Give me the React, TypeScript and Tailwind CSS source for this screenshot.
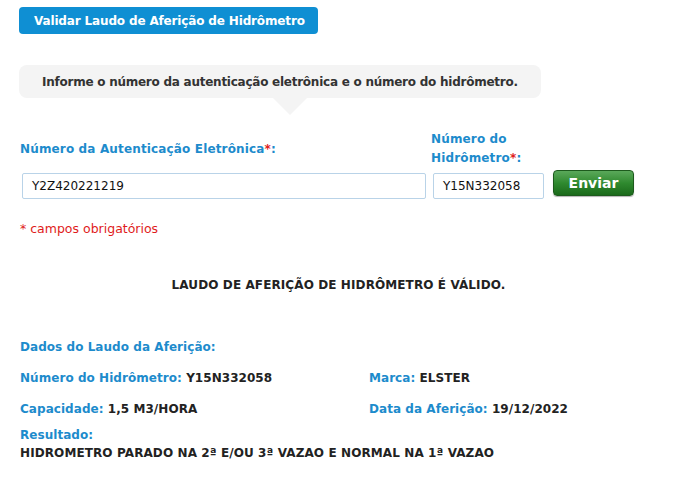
export default function App() {
  const font = { fontFamily: '"DejaVu Sans", Verdana, sans-serif' };
  return (
    <div className="w-[683px] h-[481px] bg-white relative overflow-hidden" style={font}>
      <div className="pl-[19px] pt-[7px]">
        <div className="w-[299px] h-[27px] rounded-[4px] bg-[#0f8fd3] text-white text-[12px] font-bold flex items-center pl-[15px] tracking-[-0.15px]">
          Validar Laudo de Aferição de Hidrômetro
        </div>
      </div>
      <div className="pl-[19px] mt-[31px]">
        <div className="relative w-[522px] h-[33px] rounded-[8px] bg-[#f4f4f4] text-[#333] text-[12px] font-bold flex items-center pl-[23px] tracking-[-0.25px]">
          Informe o número da autenticação eletrônica e o número do hidrômetro.
          <div className="absolute left-[254px] top-[33px] w-0 h-0 border-l-[17px] border-r-[17px] border-t-[17px] border-l-transparent border-r-transparent border-t-[#f4f4f4]" />
        </div>
      </div>
      <div className="flex mt-[32px]">
        <div className="pl-[20px] w-[411px] flex items-center">
          <div className="text-[#1d8bcc] text-[12px] font-bold tracking-[0.15px] leading-[19px]">
            Número da Autenticação Eletrônica<span className="text-[#e02020]">*</span>:
          </div>
        </div>
        <div className="pl-[20px] text-[#1d8bcc] text-[12px] font-bold leading-[19px] tracking-[0.15px]">
          Número do<br />Hidrômetro<span className="text-[#e02020]">*</span>:
        </div>
      </div>
      <div className="flex items-start mt-[-2px] pl-[22px]">
        <div className="w-[404px] h-[26px] border border-[#b9d3e8] rounded-[2px] flex items-center pl-[9px] text-[12px] text-[#111] mt-[7px]">
          Y2Z420221219
        </div>
        <div className="w-[111px] h-[26px] border border-[#b9d3e8] rounded-[2px] flex items-center pl-[9px] text-[12px] text-[#111] ml-[7px] mt-[7px]">
          Y15N332058
        </div>
        <div className="ml-[9px] mt-[4px] w-[81px] h-[26px] rounded-[4px] border border-[#1d5a1d] bg-gradient-to-b from-[#5aa85a] via-[#2f8a2f] to-[#1b6a1b] text-white text-[14px] font-bold flex items-center justify-center shadow-[0_1px_1px_rgba(0,0,0,0.3)]">
          Enviar
        </div>
      </div>
      <div className="pl-[20px] mt-[22px] text-[#e01b1b] text-[12.5px] leading-[15px]">* campos obrigatórios</div>
      <div className="mt-[42px] text-center text-[#222] text-[12px] font-bold pr-[6px] tracking-[0.1px] leading-[15px]">
        LAUDO DE AFERIÇÃO DE HIDRÔMETRO É VÁLIDO.
      </div>
      <div className="pl-[20px] mt-[47px] text-[12px] font-bold leading-[15px] tracking-[0.05px]">
        <div className="text-[#1d8bcc]">Dados do Laudo da Aferição:</div>
        <div className="flex mt-[16px]">
          <div className="w-[349px]"><span className="text-[#1d8bcc]">Número do Hidrômetro:</span> <span className="text-[#222]">Y15N332058</span></div>
          <div><span className="text-[#1d8bcc]">Marca:</span> <span className="text-[#222]">ELSTER</span></div>
        </div>
        <div className="flex mt-[16px]">
          <div className="w-[349px]"><span className="text-[#1d8bcc]">Capacidade:</span> <span className="text-[#222]">1,5 M3/HORA</span></div>
          <div><span className="text-[#1d8bcc]">Data da Aferição:</span> <span className="text-[#222]">19/12/2022</span></div>
        </div>
        <div className="text-[#1d8bcc] mt-[11px]">Resultado:</div>
        <div className="text-[#222] mt-[3px] tracking-[0.1px]">HIDROMETRO PARADO NA 2ª E/OU 3ª VAZAO E NORMAL NA 1ª VAZAO</div>
      </div>
    </div>
  );
}
